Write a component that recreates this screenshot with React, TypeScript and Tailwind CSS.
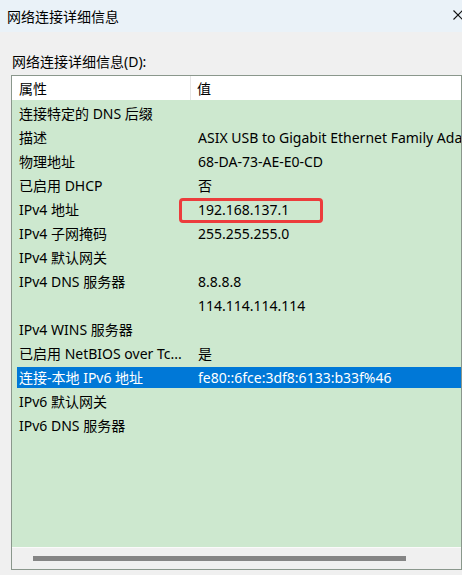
import React from 'react';

interface Row {
    name: string;
    value: string;
    selected?: boolean;
    marked?: boolean;
}

const rows: Row[] = [
    { name: '连接特定的 DNS 后缀', value: '' },
    { name: '描述', value: 'ASIX USB to Gigabit Ethernet Family Adapter' },
    { name: '物理地址', value: '68-DA-73-AE-E0-CD' },
    { name: '已启用 DHCP', value: '否' },
    { name: 'IPv4 地址', value: '192.168.137.1', marked: true },
    { name: 'IPv4 子网掩码', value: '255.255.255.0' },
    { name: 'IPv4 默认网关', value: '' },
    { name: 'IPv4 DNS 服务器', value: '8.8.8.8' },
    { name: '', value: '114.114.114.114' },
    { name: 'IPv4 WINS 服务器', value: '' },
    { name: '已启用 NetBIOS over Tc...', value: '是' },
    { name: '连接-本地 IPv6 地址', value: 'fe80::6fce:3df8:6133:b33f%46', selected: true },
    { name: 'IPv6 默认网关', value: '' },
    { name: 'IPv6 DNS 服务器', value: '' },
];

const App: React.FC = () => {
    return (
        <div
            className="w-[462px] h-[575px] bg-[#f0f0f0] overflow-hidden flex flex-col text-[14px] text-black"
            style={{ fontFamily: '"Noto Sans", "Noto Sans CJK SC", sans-serif' }}
        >
            {/* title bar */}
            <div className="h-[32px] shrink-0 bg-[#eaf2f8] flex items-center pl-[7px]">
                <span>网络连接详细信息</span>
                <svg className="ml-auto mr-[-1px] mt-[-3px]" width="10" height="10" viewBox="0 0 10 10">
                    <path d="M0.5 0.5 L9.5 9.5 M9.5 0.5 L0.5 9.5" stroke="#111" strokeWidth="1.1" fill="none" />
                </svg>
            </div>

            <div className="h-[20px] mt-[19px] pl-[12px] flex items-center shrink-0">网络连接详细信息(D):</div>

            {/* list box */}
            <div className="ml-[11px] mt-[4px] w-[451px] h-[495px] border border-[#8a978c] flex flex-col overflow-hidden">
                <div className="h-[24px] shrink-0 bg-white flex">
                    <div className="w-[179px] shrink-0 border-r border-[#e5e5e5] pl-[7px] flex items-center">属性</div>
                    <div className="pl-[6px] flex items-center">值</div>
                </div>
                <div className="flex-1 bg-[#cde8cf] pt-px">
                    {rows.map((r, i) => (
                        <div key={i} className="relative h-[24px] flex whitespace-nowrap">
                            {r.selected && <div className="absolute left-[5px] right-0 top-[2px] bottom-px bg-[#0078d7]" />}
                            <div className={`relative w-[179px] shrink-0 pl-[7px] flex items-center ${r.selected ? 'text-white' : ''}`}>{r.name}</div>
                            <div className={`relative pl-[7px] flex items-center ${r.selected ? 'text-white' : ''}`}>{r.value}</div>
                            {r.marked && (
                                <div className="absolute left-[167px] top-px w-[144px] h-[25px] border-[3px] border-[#ec3c3c] rounded-[4px]" />
                            )}
                        </div>
                    ))}
                </div>
                {/* horizontal scrollbar */}
                <div className="h-[22px] shrink-0 bg-[#f0f0f0] border-t border-[#fafafa] relative">
                    <div className="absolute left-[21px] top-[8px] w-[373px] h-[5px] bg-[#858585]" />
                </div>
            </div>
        </div>
    );
};

export default App;
